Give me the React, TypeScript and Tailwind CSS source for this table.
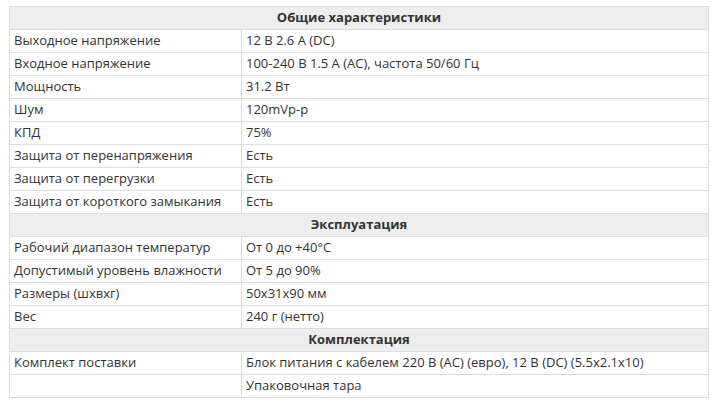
import React from 'react';

type Row = { label: string; value: string };

interface Section {
  title: string;
  rows: Row[];
}

const sections: Section[] = [
  {
    title: 'Общие характеристики',
    rows: [
      { label: 'Выходное напряжение', value: '12 В 2.6 А (DC)' },
      { label: 'Входное напряжение', value: '100-240 В 1.5 А (АС), частота 50/60 Гц' },
      { label: 'Мощность', value: '31.2 Вт' },
      { label: 'Шум', value: '120mVp-p' },
      { label: 'КПД', value: '75%' },
      { label: 'Защита от перенапряжения', value: 'Есть' },
      { label: 'Защита от перегрузки', value: 'Есть' },
      { label: 'Защита от короткого замыкания', value: 'Есть' },
    ],
  },
  {
    title: 'Эксплуатация',
    rows: [
      { label: 'Рабочий диапазон температур', value: 'От 0 до +40°C' },
      { label: 'Допустимый уровень влажности', value: 'От 5 до 90%' },
      { label: 'Размеры (шхвхг)', value: '50x31x90 мм' },
      { label: 'Вес', value: '240 г (нетто)' },
    ],
  },
  {
    title: 'Комплектация',
    rows: [
      { label: 'Комплект поставки', value: 'Блок питания с кабелем 220 В (АС) (евро), 12 В (DC) (5.5x2.1x10)' },
      { label: '', value: 'Упаковочная тара' },
    ],
  },
];

const cell = 'h-[23px] border border-[#dddddd] px-[4px] py-0 align-middle whitespace-nowrap';

export default function App() {
  return (
    <div className="bg-white w-[717px] h-[403px] pt-[6px] pl-[9px] font-['Open_Sans',sans-serif] text-[13px] text-[#333333]">
      <table className="w-[700px] border-collapse table-fixed">
        <colgroup>
          <col className="w-[232px]" />
          <col />
        </colgroup>
        <tbody>
          {sections.map((section) => (
            <React.Fragment key={section.title}>
              <tr className="bg-[#eeeeee]">
                <th colSpan={2} className={`${cell} text-center font-bold`}>
                  {section.title}
                </th>
              </tr>
              {section.rows.map((row, i) => (
                <tr key={i}>
                  <td className={cell}>{row.label}</td>
                  <td className={cell}>{row.value}</td>
                </tr>
              ))}
            </React.Fragment>
          ))}
        </tbody>
      </table>
    </div>
  );
}
